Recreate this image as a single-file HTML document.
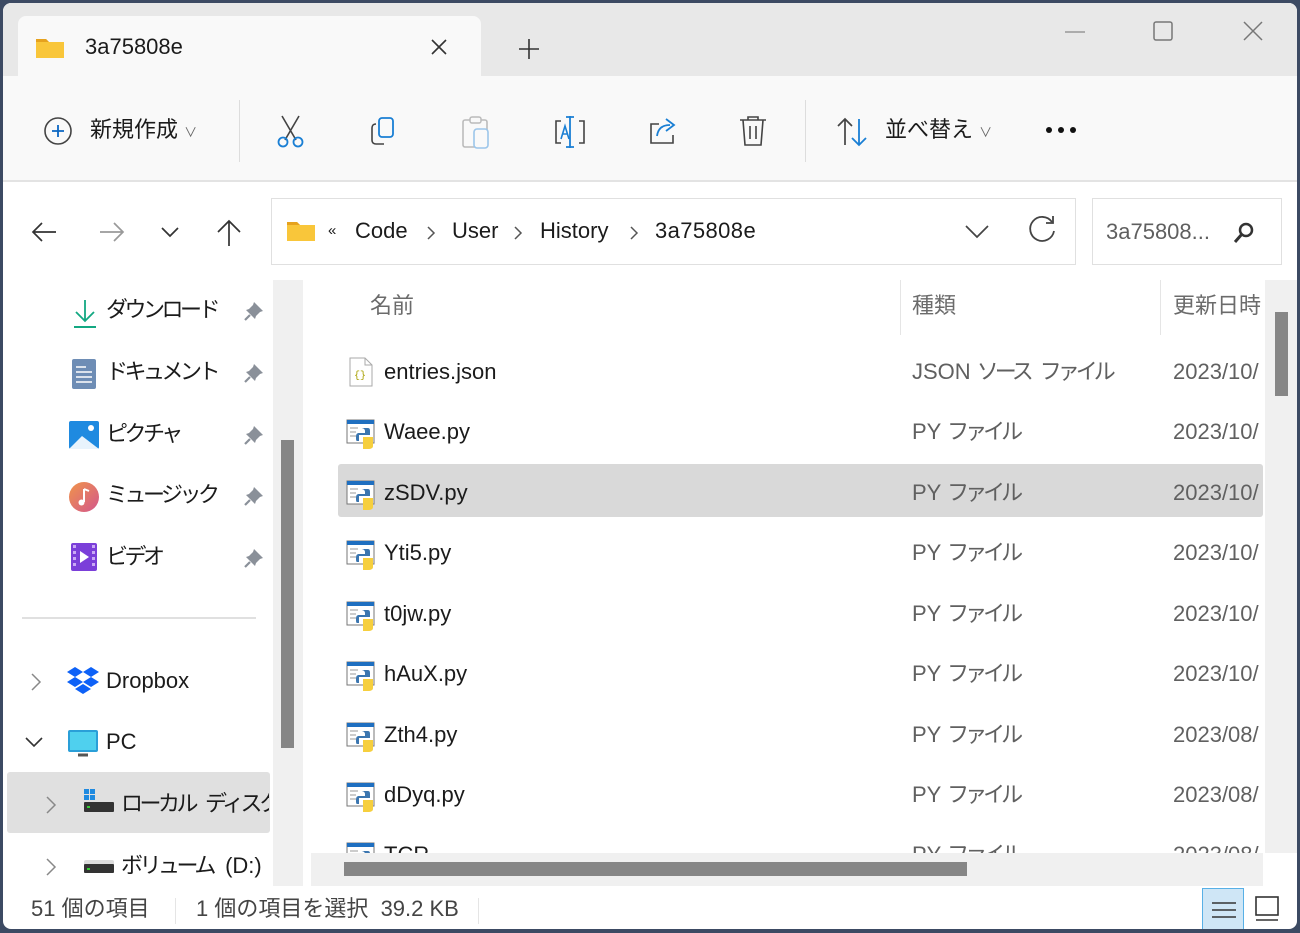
<!DOCTYPE html>
<html><head><meta charset="utf-8"><style>
*{margin:0;padding:0;box-sizing:border-box}
body{width:1300px;height:933px;background:#3c4a63;font-family:"Liberation Sans","Noto Sans CJK JP",sans-serif;color:#1b1b1b;position:relative;overflow:hidden}
.a{position:absolute}
#win{left:3px;top:3px;width:1294px;height:926px;background:#fff;border-radius:8px;overflow:hidden}
.t{position:absolute;font-size:22px;line-height:30px;white-space:nowrap}
.g{color:#5f5f5f}
.k{letter-spacing:-3.5px}
.k2{letter-spacing:-4px}
.sp{display:inline-block;width:10px}
svg{position:absolute;overflow:visible}
</style></head><body>
<div id="win" class="a">
 <div class="a" style="left:0;top:0;width:1294px;height:73px;background:#e8e8e8"></div>
 <div class="a" style="left:15px;top:13px;width:463px;height:62px;background:#f9f9f9;border-radius:8px 8px 0 0"></div>
 <svg style="left:32px;top:34px" width="30" height="22"><path d="M1 2h10l3 3h15v16H1z" fill="#f9c63a"/><path d="M1 2h10l3 3H1z" fill="#e6a21e"/></svg>
 <div class="t" style="left:82px;top:29px">3a75808e</div>
 <svg style="left:428px;top:36px" width="16" height="16"><path d="M1 1L15 15M15 1L1 15" stroke="#333" stroke-width="1.6"/></svg>
 <svg style="left:516px;top:36px" width="20" height="20"><path d="M10 0V20M0 10H20" stroke="#333" stroke-width="1.6"/></svg>
 <svg style="left:1062px;top:28px" width="20" height="2"><path d="M0 1H20" stroke="#888" stroke-width="1.3"/></svg>
 <svg style="left:1150px;top:18px" width="20" height="20"><rect x="1" y="1" width="18" height="18" rx="2" fill="none" stroke="#777" stroke-width="1.5"/></svg>
 <svg style="left:1240px;top:18px" width="20" height="20"><path d="M1 1L19 19M19 1L1 19" stroke="#777" stroke-width="1.5"/></svg>
 <div class="a" style="left:0;top:73px;width:1294px;height:106px;background:#f9f9f9;border-bottom:2px solid #e3e3e3"></div>
 <svg style="left:40px;top:113px" width="30" height="30"><circle cx="15" cy="15" r="13" fill="none" stroke="#444" stroke-width="1.6"/><path d="M15 9V21M9 15H21" stroke="#0a66c2" stroke-width="1.8"/></svg>
 <div class="t" style="left:87px;top:112px">新規作成 <span style="font-size:13px;color:#666">∨</span></div>
 <div class="a" style="left:236px;top:97px;width:1px;height:62px;background:#ddd"></div>
 <div class="a" style="left:802px;top:97px;width:1px;height:62px;background:#ddd"></div>
 <svg style="left:274px;top:112px" width="30" height="34"><path d="M5 1L19 25M22 1L8 25" stroke="#444" stroke-width="1.6"/><circle cx="6" cy="27" r="4.5" fill="none" stroke="#1a7fd4" stroke-width="1.8"/><circle cx="21" cy="27" r="4.5" fill="none" stroke="#1a7fd4" stroke-width="1.8"/></svg>
 <svg style="left:367px;top:114px" width="30" height="30"><rect x="9" y="1" width="14" height="19" rx="3" fill="none" stroke="#1a7fd4" stroke-width="1.8"/><path d="M6 7C3 7 2 9 2 11V23C2 26 4 27 6 27H14" fill="none" stroke="#444" stroke-width="1.6"/></svg>
 <svg style="left:459px;top:113px" width="30" height="34"><rect x="1" y="4" width="24" height="27" rx="2" fill="none" stroke="#bbb" stroke-width="1.6"/><rect x="8" y="1" width="11" height="6" rx="2" fill="#f9f9f9" stroke="#bbb" stroke-width="1.5"/><rect x="12" y="13" width="14" height="19" rx="3" fill="#f9f9f9" stroke="#9cc6ea" stroke-width="1.6"/></svg>
 <svg style="left:550px;top:112px" width="34" height="34"><path d="M8 6H3V28H8M26 6H31V28H26" fill="none" stroke="#444" stroke-width="1.6"/><path d="M17 1V33M13 2H21M13 32H21" stroke="#1a7fd4" stroke-width="1.8"/><path d="M8 24L12 11L16 24M9.5 19H15" stroke="#1a7fd4" stroke-width="1.6" fill="none"/></svg>
 <svg style="left:644px;top:113px" width="32" height="30"><path d="M12 8H4V27H26V19" fill="none" stroke="#444" stroke-width="1.6"/><path d="M10 20C11 12 16 9 23 9M19 3L27 9L19 15" fill="none" stroke="#1a7fd4" stroke-width="1.8"/></svg>
 <svg style="left:736px;top:112px" width="30" height="32"><path d="M1 5H27M9 5V2H19V5M4 5L6 30H22L24 5M11 11V24M17 11V24" fill="none" stroke="#444" stroke-width="1.6"/></svg>
 <svg style="left:834px;top:114px" width="34" height="30"><path d="M8 28V2M1 9L8 2L15 9" fill="none" stroke="#444" stroke-width="1.7"/><path d="M22 2V28M15 21L22 28L29 21" fill="none" stroke="#1a7fd4" stroke-width="1.8"/></svg>
 <div class="t" style="left:882px;top:112px">並べ替え <span style="font-size:13px;color:#666">∨</span></div>
 <svg style="left:1042px;top:123px" width="36" height="8"><circle cx="4" cy="4" r="3" fill="#111"/><circle cx="16" cy="4" r="3" fill="#111"/><circle cx="28" cy="4" r="3" fill="#111"/></svg>
 <svg style="left:28px;top:218px" width="26" height="22"><path d="M25 11H2M11 2L2 11L11 20" fill="none" stroke="#333" stroke-width="1.7"/></svg>
 <svg style="left:96px;top:218px" width="26" height="22"><path d="M1 11H24M15 2L24 11L15 20" fill="none" stroke="#999" stroke-width="1.7"/></svg>
 <svg style="left:158px;top:224px" width="18" height="10"><path d="M1 1L9 9L17 1" fill="none" stroke="#333" stroke-width="1.7"/></svg>
 <svg style="left:213px;top:216px" width="26" height="28"><path d="M13 27V2M2 13L13 2L24 13" fill="none" stroke="#333" stroke-width="1.7"/></svg>
 <div class="a" style="left:268px;top:195px;width:805px;height:67px;border:1.5px solid #e0e0e0;background:#fff"></div>
 <svg style="left:283px;top:217px" width="30" height="22"><path d="M1 2h10l3 3h15v16H1z" fill="#f9c63a"/><path d="M1 2h10l3 3H1z" fill="#e6a21e"/></svg>
 <div class="t" style="left:325px;top:213px;font-size:15px">«</div>
 <div class="t" style="left:352px;top:213px">Code</div>
 <svg style="left:424px;top:223px" width="8" height="14"><path d="M1 1L7 7L1 13" fill="none" stroke="#555" stroke-width="1.5"/></svg>
 <div class="t" style="left:449px;top:213px">User</div>
 <svg style="left:511px;top:223px" width="8" height="14"><path d="M1 1L7 7L1 13" fill="none" stroke="#555" stroke-width="1.5"/></svg>
 <div class="t" style="left:537px;top:213px">History</div>
 <svg style="left:627px;top:223px" width="8" height="14"><path d="M1 1L7 7L1 13" fill="none" stroke="#555" stroke-width="1.5"/></svg>
 <div class="t" style="left:652px;top:213px;letter-spacing:0.4px">3a75808e</div>
 <svg style="left:962px;top:222px" width="24" height="14"><path d="M1 1L12 12L23 1" fill="none" stroke="#444" stroke-width="1.7"/></svg>
 <svg style="left:1026px;top:214px" width="28" height="28"><path d="M23 5A12 12 0 1 0 25 14" fill="none" stroke="#444" stroke-width="1.8"/><path d="M17 4H24V-3" fill="none" stroke="#444" stroke-width="1.8" transform="translate(0,2)"/></svg>
 <div class="a" style="left:1089px;top:195px;width:190px;height:67px;border:1.5px solid #e0e0e0"></div>
 <div class="t g" style="left:1103px;top:214px">3a75808...</div>
 <svg style="left:1230px;top:219px" width="22" height="22"><circle cx="13" cy="8" r="6" fill="none" stroke="#333" stroke-width="2.5"/><path d="M9 12L2 20" stroke="#333" stroke-width="3"/></svg>
 <div class="a" style="left:270px;top:277px;width:30px;height:606px;background:#f0f0f0"></div>
 <div class="a" style="left:278px;top:437px;width:13px;height:308px;background:#868686"></div>
 <svg style="left:70px;top:296px" width="24" height="30"><path d="M12 1V21M3 13L12 22L21 13" fill="none" stroke="#13a882" stroke-width="1.8"/><path d="M1 28H23" stroke="#13a882" stroke-width="2"/></svg>
 <div class="t k" style="left:103px;top:292px">ダウンロード</div>
 <svg style="left:69px;top:356px" width="24" height="30"><rect x="0" y="0" width="24" height="30" rx="2" fill="#6e8db5"/><path d="M4 8H14M4 13H20M4 18H20M4 23H20" stroke="#fff" stroke-width="1.5"/></svg>
 <div class="t k" style="left:103px;top:354px">ドキュメント</div>
 <svg style="left:66px;top:418px" width="30" height="28"><rect width="30" height="28" rx="2" fill="#1f8ae0"/><path d="M0 28L13 15L30 28z" fill="#e8f3fc"/><circle cx="22" cy="7" r="3" fill="#fff"/></svg>
 <div class="t k" style="left:103px;top:416px">ピクチャ</div>
 <svg style="left:66px;top:479px" width="30" height="30"><defs><linearGradient id="mg" x1="0" y1="0" x2="1" y2="1"><stop offset="0" stop-color="#f0944a"/><stop offset="1" stop-color="#d3578c"/></linearGradient></defs><circle cx="15" cy="15" r="15" fill="url(#mg)"/><path d="M15 7V20M15 7L20 9" stroke="#fff" stroke-width="2" fill="none"/><circle cx="12.5" cy="20.5" r="3" fill="#fff"/></svg>
 <div class="t k" style="left:103px;top:477px">ミュージック</div>
 <svg style="left:68px;top:540px" width="26" height="28"><rect width="26" height="28" rx="2" fill="#7b3fd9"/><path d="M2 2h3v3H2zM2 8h3v3H2zM2 14h3v3H2zM2 20h3v3H2zM21 2h3v3h-3zM21 8h3v3h-3zM21 14h3v3h-3zM21 20h3v3h-3z" fill="#caa9f5"/><path d="M9 8L18 14L9 20z" fill="#fff"/></svg>
 <div class="t k" style="left:103px;top:539px">ビデオ</div>
 <svg style="left:241px;top:298px" width="20" height="20"><path d="M10 1L19 10L16 11L12 15L11 18L2 9L5 8L9 4z" fill="#8a9099"/><path d="M6 14L1 19" stroke="#8a9099" stroke-width="2.2"/></svg>
 <svg style="left:241px;top:360px" width="20" height="20"><path d="M10 1L19 10L16 11L12 15L11 18L2 9L5 8L9 4z" fill="#8a9099"/><path d="M6 14L1 19" stroke="#8a9099" stroke-width="2.2"/></svg>
 <svg style="left:241px;top:422px" width="20" height="20"><path d="M10 1L19 10L16 11L12 15L11 18L2 9L5 8L9 4z" fill="#8a9099"/><path d="M6 14L1 19" stroke="#8a9099" stroke-width="2.2"/></svg>
 <svg style="left:241px;top:483px" width="20" height="20"><path d="M10 1L19 10L16 11L12 15L11 18L2 9L5 8L9 4z" fill="#8a9099"/><path d="M6 14L1 19" stroke="#8a9099" stroke-width="2.2"/></svg>
 <svg style="left:241px;top:545px" width="20" height="20"><path d="M10 1L19 10L16 11L12 15L11 18L2 9L5 8L9 4z" fill="#8a9099"/><path d="M6 14L1 19" stroke="#8a9099" stroke-width="2.2"/></svg>
 <div class="a" style="left:19px;top:614px;width:234px;height:2px;background:#e0e0e0"></div>
 <svg style="left:28px;top:670px" width="10" height="18"><path d="M1 1L9 9L1 17" fill="none" stroke="#888" stroke-width="1.5"/></svg>
 <svg style="left:64px;top:664px" width="32" height="30"><path d="M8 0L16 5L8 10L0 5zM24 0L32 5L24 10L16 5zM8 10L16 15L8 20L0 15zM24 10L32 15L24 20L16 15zM16 17L24 22L16 27L8 22z" fill="#0d61f7"/></svg>
 <div class="t" style="left:103px;top:663px">Dropbox</div>
 <svg style="left:22px;top:734px" width="18" height="10"><path d="M1 1L9 9L17 1" fill="none" stroke="#333" stroke-width="1.6"/></svg>
 <svg style="left:65px;top:727px" width="30" height="28"><rect width="30" height="22" rx="2" fill="#2a9fd8"/><rect x="2" y="2" width="26" height="18" fill="#4fd0ee"/><path d="M10 25H20" stroke="#555" stroke-width="3"/></svg>
 <div class="t" style="left:103px;top:724px">PC</div>
 <div class="a" style="left:4px;top:769px;width:263px;height:61px;background:#e0e0e0;border-radius:3px"></div>
 <svg style="left:43px;top:793px" width="10" height="18"><path d="M1 1L9 9L1 17" fill="none" stroke="#888" stroke-width="1.5"/></svg>
 <svg style="left:81px;top:786px" width="30" height="24"><path d="M0 0h5v5H0zM6 0h5v5H6zM0 6h5v5H0zM6 6h5v5H6z" fill="#1f8ae0"/><rect x="0" y="13" width="30" height="10" rx="1" fill="#333"/><rect x="3" y="17" width="3" height="2" fill="#3c3"/></svg>
 <div class="t" style="left:118px;top:786px;width:148px;overflow:hidden"><span class="k">ローカル</span><span class="sp"></span><span class="k">ディスク</span></div>
 <svg style="left:43px;top:855px" width="10" height="18"><path d="M1 1L9 9L1 17" fill="none" stroke="#888" stroke-width="1.5"/></svg>
 <svg style="left:81px;top:857px" width="30" height="14"><rect width="30" height="12" rx="2" fill="#ddd"/><rect y="4" width="30" height="9" rx="1" fill="#333"/><rect x="3" y="8" width="3" height="2" fill="#3c3"/></svg>
 <div class="t" style="left:118px;top:848px"><span class="k">ボリューム</span>&nbsp; (D:)</div>
 <div class="t g" style="left:367px;top:288px;color:#6b6b6b">名前</div>
 <div class="a" style="left:897px;top:277px;width:1px;height:55px;background:#e5e5e5"></div>
 <div class="t g" style="left:909px;top:288px;color:#6b6b6b">種類</div>
 <div class="a" style="left:1157px;top:277px;width:1px;height:55px;background:#e5e5e5"></div>
 <div class="t g" style="left:1170px;top:288px;color:#6b6b6b">更新日時</div>
 <div class="a" style="left:335px;top:461px;width:925px;height:53px;background:#d9d9d9;border-radius:3px"></div>
 <svg style="left:346px;top:354px" width="24" height="30"><path d="M1 1H16L23 8V29H1z" fill="#fff" stroke="#aaa"/><path d="M16 1V8H23" fill="none" stroke="#aaa"/><text x="5" y="21" font-size="10" fill="#a8a000" font-family="Liberation Mono">{}</text></svg>
 <div class="t" style="left:381px;top:354px">entries.json</div>
 <div class="t g" style="left:909px;top:354px;color:#606060">JSON <span class="k2">ソース</span><span class="sp"></span><span class="k2">ファイル</span></div>
 <div class="t g" style="left:1170px;top:354px;color:#606060">2023/10/</div>
 <div id="rows"></div>
 <div class="a" style="left:1262px;top:277px;width:32px;height:573px;background:#f0f0f0"></div>
 <div class="a" style="left:1272px;top:309px;width:13px;height:84px;background:#868686"></div>
 <div class="a" style="left:308px;top:850px;width:952px;height:33px;background:#f0f0f0"></div>
 <div class="a" style="left:341px;top:859px;width:623px;height:14px;background:#868686"></div>
 <div class="t g" style="left:28px;top:891px;color:#444">51 個の項目</div>
 <div class="a" style="left:172px;top:895px;width:1px;height:26px;background:#e5e5e5"></div>
 <div class="t g" style="left:193px;top:891px;color:#444">1 個の項目を選択&nbsp; 39.2 KB</div>
 <div class="a" style="left:475px;top:895px;width:1px;height:26px;background:#e5e5e5"></div>
 <div class="a" style="left:1199px;top:885px;width:42px;height:44px;background:#cfe6f6;border:1.5px solid #58b0e6"></div>
 <svg style="left:1208px;top:897px" width="26" height="22"><path d="M1 3H25M1 10H25M1 17H25" stroke="#333" stroke-width="1.6"/></svg>
 <svg style="left:1252px;top:893px" width="26" height="26"><rect x="1" y="1" width="22" height="18" fill="none" stroke="#333" stroke-width="1.6"/><path d="M1 24H23" stroke="#333" stroke-width="1.6"/></svg>
</div>
<script>
var r=[["Waee.py","10",429],["zSDV.py","10",490],["Yti5.py","10",550],["t0jw.py","10",611],["hAuX.py","10",671],["Zth4.py","08",732],["dDyq.py","08",792],["TCR","08",852]];
var h="";
var ic='<path d="M1 1H28V24H1z" fill="#fff" stroke="#777"/><path d="M1 1H28V5H1z" fill="#1f6fc0"/><path d="M4 9H12M4 13H10M4 17H10" stroke="#999"/><path d="M15 9H22C24 9 24 11 24 12V16H13V22H11C10 22 10 20 10 18C10 15 11 14 13 14H19V12C19 10 17 9 15 9z" fill="#3b76b0"/><path d="M17 18H27V27C27 29 25 30 22 30H17z" fill="#f6cf3e"/>';
r.forEach(function(x){var y=x[2];
h+='<svg style="left:343px;top:'+(y-13)+'px" width="30" height="30">'+ic+'</svg>';
h+='<div class="t" style="left:381px;top:'+(y-15)+'px">'+x[0]+'</div>';
h+='<div class="t" style="left:909px;top:'+(y-15)+'px;color:#606060">PY <span class="k2">ファイル</span></div>';
h+='<div class="t" style="left:1170px;top:'+(y-15)+'px;color:#606060;width:90px;overflow:hidden">2023/'+x[1]+'/</div>';});
document.getElementById("rows").outerHTML=h;
</script>
</body></html>
